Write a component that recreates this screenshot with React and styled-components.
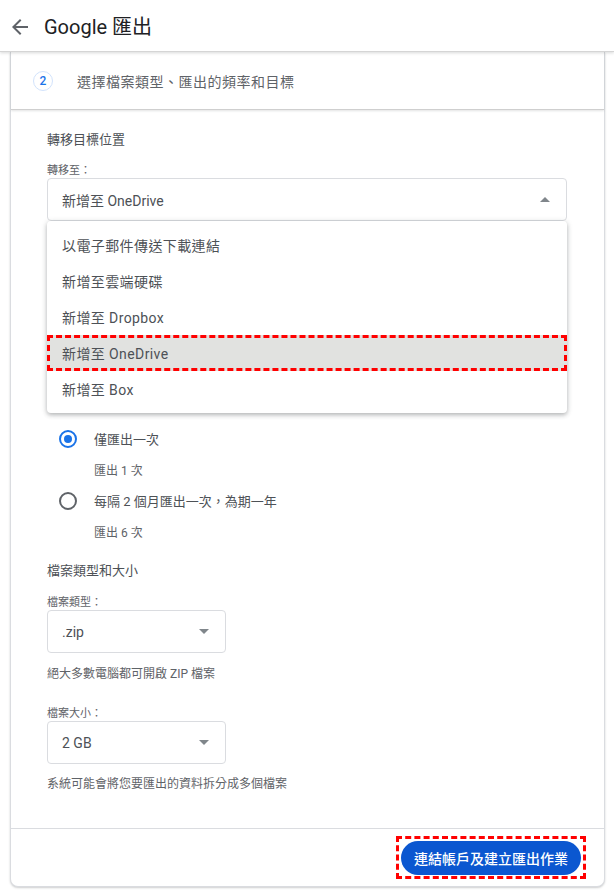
import React from 'react';
import styled, { createGlobalStyle } from 'styled-components';

const GlobalStyle = createGlobalStyle`
  html, body {
    margin: 0;
    padding: 0;
    background: #ffffff;
    font-family: Roboto, "Noto Sans CJK TC", "Noto Sans", sans-serif;
    color: #3c4043;
  }
  * { box-sizing: border-box; }
`;

const TopBar = styled.header`
  height: 52px;
  display: flex;
  align-items: center;
  padding-left: 8px;
  background: #fff;
  border-bottom: 1px solid #d5d5d5;
  box-shadow: 0 1px 3px rgba(60, 64, 67, 0.2);
  position: relative;
  z-index: 2;
`;

const BackButton = styled.button`
  width: 24px;
  height: 24px;
  padding: 0;
  border: none;
  background: none;
  display: flex;
  color: #5f6368;
  margin-top: 2px;
`;

const Title = styled.h1`
  margin: 2px 0 0 12px;
  font-size: 20px;
  font-weight: 400;
  color: #202124;
  line-height: 28px;
`;

const Card = styled.section`
  margin: 0 9px 5px 10px;
  border: 1px solid #dadce0;
  border-top: none;
  border-radius: 0 0 8px 8px;
  box-shadow: 0 1px 2px rgba(60, 64, 67, 0.25);
  background: #fff;
`;

const StepHead = styled.div`
  height: 58px;
  display: flex;
  align-items: center;
  padding-left: 22px;
  gap: 24px;
  border-bottom: 1px solid #cfcfcf;
  box-shadow: 0 1px 2px rgba(60, 64, 67, 0.15);
`;

const StepNumber = styled.span`
  width: 20px;
  height: 20px;
  border-radius: 50%;
  border: 1px solid #d2e3fc;
  color: #1a73e8;
  font-size: 12px;
  font-weight: 500;
  display: flex;
  align-items: center;
  justify-content: center;
`;

const StepText = styled.span`
  font-size: 14px;
  color: #5f6368;
  letter-spacing: 0.5px;
`;

const Body = styled.div`
  padding: 20px 36px 34px 36px;
`;

const SectionTitle = styled.div`
  font-size: 13px;
  line-height: 20px;
  color: #4d5156;
  margin-top: ${p => p.$top || 0}px;
`;

const FieldLabel = styled.div`
  font-size: 11px;
  line-height: 16px;
  color: #5f6368;
  margin-top: ${p => p.$top || 0}px;
`;

const SelectWrap = styled.div`
  position: relative;
  margin-top: -1px;
  width: ${p => p.$width}px;
`;

const SelectBox = styled.div`
  height: 43px;
  border: 1px solid #dadce0;
  border-radius: 4px;
  display: flex;
  align-items: center;
  justify-content: space-between;
  padding: 0 16px 0 14px;
  font-size: 14px;
  color: #4d5156;
`;

const Arrow = styled.span`
  width: 0;
  height: 0;
  border-left: 5px solid transparent;
  border-right: 5px solid transparent;
  ${p => (p.$up ? 'border-bottom: 5px solid #80868b;' : 'border-top: 5px solid #80868b;')}
`;

const Menu = styled.ul`
  position: absolute;
  top: 100%;
  left: 0;
  right: 0;
  margin: 0;
  padding: 6px 0;
  list-style: none;
  background: #fff;
  border-radius: 4px;
  box-shadow: 0 2px 4px rgba(60, 64, 67, 0.3), 0 1px 6px rgba(60, 64, 67, 0.15);
  z-index: 5;
`;

const MenuItem = styled.li`
  height: 36px;
  display: flex;
  align-items: center;
  font-size: 14px;
  color: #4d5156;
  letter-spacing: 0.4px;
  background: ${p => (p.$active ? '#e1e2e0' : 'transparent')};
  border: ${p => (p.$active ? '3px dashed #ff0000' : 'none')};
  padding-left: ${p => (p.$active ? 12 : 15)}px;
`;

const RadioGroup = styled.div`
  margin-top: 202px;
  padding-left: 12px;
`;

const RadioRow = styled.label`
  height: 31px;
  display: flex;
  align-items: center;
  gap: 17px;
  font-size: 13px;
  color: #4d5156;
`;

const RadioCircle = styled.span`
  width: 18px;
  height: 18px;
  border-radius: 50%;
  border: 2px solid ${p => (p.$checked ? '#1a73e8' : '#5f6368')};
  display: flex;
  align-items: center;
  justify-content: center;
  &::after {
    content: '';
    width: 8px;
    height: 8px;
    border-radius: 50%;
    background: ${p => (p.$checked ? '#1a73e8' : 'transparent')};
  }
`;

const RadioSub = styled.div`
  height: 31px;
  display: flex;
  align-items: center;
  padding-left: 35px;
  font-size: 12px;
  color: #5f6368;
`;

const Helper = styled.div`
  font-size: 12px;
  line-height: 20px;
  color: #5f6368;
  margin-top: ${p => p.$top || 11}px;
`;

const Footer = styled.div`
  height: 58px;
  border-top: 1px solid #dadce0;
  display: flex;
  align-items: center;
  justify-content: flex-end;
  padding-right: 18px;
`;

const Highlight = styled.span`
  display: inline-flex;
  padding: 2px 2px 1px 2px;
  border: 3px dashed #ff0000;
`;

const PrimaryButton = styled.button`
  height: 34px;
  width: 180px;
  border: none;
  border-radius: 17px;
  background: #0b57d0;
  color: #fff;
  font-family: inherit;
  font-size: 14px;
  font-weight: 500;
`;

const destinations = [
  '以電子郵件傳送下載連結',
  '新增至雲端硬碟',
  '新增至 Dropbox',
  '新增至 OneDrive',
  '新增至 Box',
];

export default function App() {
  return (
    <>
      <GlobalStyle />
      <TopBar>
        <BackButton aria-label="返回">
          <svg width="24" height="24" viewBox="0 0 24 24" fill="currentColor">
            <path d="M20 11H7.83l5.59-5.59L12 4l-8 8 8 8 1.41-1.41L7.83 13H20v-2z" />
          </svg>
        </BackButton>
        <Title>Google 匯出</Title>
      </TopBar>

      <Card>
        <StepHead>
          <StepNumber>2</StepNumber>
          <StepText>選擇檔案類型、匯出的頻率和目標</StepText>
        </StepHead>

        <Body>
          <SectionTitle>轉移目標位置</SectionTitle>
          <FieldLabel $top={13}>轉移至：</FieldLabel>
          <SelectWrap $width={520}>
            <SelectBox>
              新增至 OneDrive
              <Arrow $up />
            </SelectBox>
            <Menu>
              {destinations.map(d => (
                <MenuItem key={d} $active={d === '新增至 OneDrive'}>{d}</MenuItem>
              ))}
            </Menu>
          </SelectWrap>

          <RadioGroup>
            <RadioRow>
              <RadioCircle $checked />
              僅匯出一次
            </RadioRow>
            <RadioSub>匯出 1 次</RadioSub>
            <RadioRow>
              <RadioCircle />
              每隔 2 個月匯出一次，為期一年
            </RadioRow>
            <RadioSub>匯出 6 次</RadioSub>
          </RadioGroup>

          <SectionTitle $top={14}>檔案類型和大小</SectionTitle>
          <FieldLabel $top={14}>檔案類型：</FieldLabel>
          <SelectWrap $width={179}>
            <SelectBox>
              .zip
              <Arrow />
            </SelectBox>
          </SelectWrap>
          <Helper>絕大多數電腦都可開啟 ZIP 檔案</Helper>

          <FieldLabel $top={22}>檔案大小：</FieldLabel>
          <SelectWrap $width={179}>
            <SelectBox>
              2 GB
              <Arrow />
            </SelectBox>
          </SelectWrap>
          <Helper $top={10}>系統可能會將您要匯出的資料拆分成多個檔案</Helper>
        </Body>

        <Footer>
          <Highlight>
            <PrimaryButton>連結帳戶及建立匯出作業</PrimaryButton>
          </Highlight>
        </Footer>
      </Card>
    </>
  );
}
